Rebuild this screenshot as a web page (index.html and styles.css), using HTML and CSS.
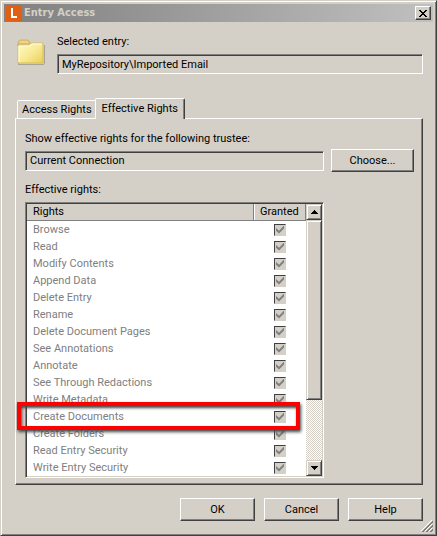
FILE: index.html
```html
<!DOCTYPE html>
<html lang="en">

<head>
    <meta charset="utf-8">
    <title>Entry Access</title>
    <link rel="stylesheet" href="styles.css">
</head>

<body>
    <div class="window">
        <div class="titlebar">
            <svg class="logo" viewBox="0 0 16 16" width="16" height="16">
                <rect width="16" height="16" fill="#e05f14" />
                <path d="M6 3v9h5" fill="none" stroke="#fff" stroke-width="2" />
            </svg>
            <h1>Entry Access</h1>
            <button class="close" type="button" aria-label="Close">
                <svg viewBox="0 0 8 7" width="8" height="7" shape-rendering="crispEdges">
                    <path d="M0 0h2v1h1v1h2v-1h1v-1h2v1h-1v1h-1v1h-1v1h1v1h1v1h1v1h-2v-1h-1v-1h-2v1h-1v1h-2v-1h1v-1h1v-1h1v-1h-1v-1h-1v-1h-1z" />
                </svg>
            </button>
        </div>

        <div class="entry">
            <svg class="folder" viewBox="0 0 28 26" width="28" height="26">
                <defs>
                    <linearGradient id="paper" x1="0" y1="0" x2="1" y2="1">
                        <stop offset="0" stop-color="#fffbc6" />
                        <stop offset="0.5" stop-color="#f9ea96" />
                        <stop offset="1" stop-color="#ebcf58" />
                    </linearGradient>
                </defs>
                <path d="M1 4h1v21h26V6h-1v20H1z" fill="#aaa496" />
                <path d="M1 7V3l2-2h8l2 2v2H1z" fill="#e8c76c" stroke="#d1b467" />
                <path d="M3 3h8" stroke="#f7e2a0" />
                <path d="M1 6h11l2-2h12v20H1z" fill="url(#paper)" stroke="#d9bd61" />
                <path d="M2 23V7h11l2-2h10" fill="none" stroke="#fffce0" />
            </svg>
            <div class="entry-field">
                <label for="entry">Selected entry:</label>
                <input class="field" id="entry" type="text" value="MyRepository\Imported Email" readonly>
            </div>
        </div>

        <div class="tabs" role="tablist">
            <button class="tab" type="button" role="tab" aria-selected="false">Access Rights</button>
            <button class="tab active" type="button" role="tab" aria-selected="true">Effective Rights</button>
        </div>

        <div class="panel" role="tabpanel">
            <label class="wide" for="trustee">Show effective rights for the following trustee:</label>
            <input class="field" id="trustee" type="text" value="Current Connection" readonly>
            <button class="btn choose" type="button">Choose...</button>

            <div class="caption wide" id="rights-label">Effective rights:</div>
            <div class="list">
                <table aria-labelledby="rights-label">
                    <thead>
                        <tr><th>Rights</th><th class="granted">Granted</th></tr>
                    </thead>
                    <tbody>
                        <tr><td><label for="r1">Browse</label></td><td><input id="r1" type="checkbox" checked disabled></td></tr>
                        <tr><td><label for="r2">Read</label></td><td><input id="r2" type="checkbox" checked disabled></td></tr>
                        <tr><td><label for="r3">Modify Contents</label></td><td><input id="r3" type="checkbox" checked disabled></td></tr>
                        <tr><td><label for="r4">Append Data</label></td><td><input id="r4" type="checkbox" checked disabled></td></tr>
                        <tr><td><label for="r5">Delete Entry</label></td><td><input id="r5" type="checkbox" checked disabled></td></tr>
                        <tr><td><label for="r6">Rename</label></td><td><input id="r6" type="checkbox" checked disabled></td></tr>
                        <tr><td><label for="r7">Delete Document Pages</label></td><td><input id="r7" type="checkbox" checked disabled></td></tr>
                        <tr><td><label for="r8">See Annotations</label></td><td><input id="r8" type="checkbox" checked disabled></td></tr>
                        <tr><td><label for="r9">Annotate</label></td><td><input id="r9" type="checkbox" checked disabled></td></tr>
                        <tr><td><label for="r10">See Through Redactions</label></td><td><input id="r10" type="checkbox" checked disabled></td></tr>
                        <tr><td><label for="r11">Write Metadata</label></td><td><input id="r11" type="checkbox" checked disabled></td></tr>
                        <tr><td><label for="r12">Create Documents</label></td><td><input id="r12" type="checkbox" checked disabled></td></tr>
                        <tr><td><label for="r13">Create Folders</label></td><td><input id="r13" type="checkbox" checked disabled></td></tr>
                        <tr><td><label for="r14">Read Entry Security</label></td><td><input id="r14" type="checkbox" checked disabled></td></tr>
                        <tr><td><label for="r15">Write Entry Security</label></td><td><input id="r15" type="checkbox" checked disabled></td></tr>
                    </tbody>
                </table>
                <div class="scrollbar">
                    <button class="arrow" type="button" aria-label="Scroll up">
                        <svg viewBox="0 0 7 4" width="7" height="4" shape-rendering="crispEdges"><path d="M3 0h1v1h1v1h1v1h1v1H0V3h1V2h1V1h1z" /></svg>
                    </button>
                    <div class="track"><div class="thumb"></div></div>
                    <button class="arrow" type="button" aria-label="Scroll down">
                        <svg viewBox="0 0 7 4" width="7" height="4" shape-rendering="crispEdges"><path d="M0 0h7v1H6v1H5v1H4v1H3V3H2V2H1V1H0z" /></svg>
                    </button>
                </div>
                <div class="highlight"></div>
            </div>
        </div>

        <div class="actions">
            <button class="btn" type="button">OK</button>
            <button class="btn" type="button">Cancel</button>
            <button class="btn" type="button">Help</button>
        </div>

        <svg class="grip" viewBox="0 0 12 12" width="12" height="12">
            <path d="M0 11L11 0M4 11l7-7M8 11l3-3" stroke="#fff" />
            <path d="M1 12L12 1M2 12L12 2M5 12l7-7M6 12l6-6M9 12l3-3M10 12l2-2" stroke="#808080" />
        </svg>
    </div>
</body>

</html>
```
FILE: styles.css
```css
* {
    box-sizing: border-box;
}

body {
    margin: 0;
    background: #d4d0c8;
}

body, button, input {
    font-family: Tahoma, Roboto, sans-serif;
    font-size: 11px;
    line-height: 14px;
    color: #000;
}

button, input {
    margin: 0;
    border-radius: 0;
}

button {
    padding: 0;
    background: #d4d0c8;
}

.window {
    position: relative;
    min-height: 100vh;
    padding: 2px;
    border: 1px solid;
    border-color: #d4d0c8 #404040 #404040 #d4d0c8;
    box-shadow: inset 1px 1px #fff, inset -1px -1px #808080;
}

/* title bar */
.titlebar {
    display: flex;
    align-items: center;
    height: 18px;
    margin: 1px;
    padding: 0 2px;
    background: linear-gradient(to right, #808080, #c0c0c0);
}

.titlebar h1 {
    flex: 1;
    margin: 0 2px;
    font-family: "DejaVu Sans Condensed", "DejaVu Sans", sans-serif;
    font-size: 11px;
    font-stretch: condensed;
    font-weight: bold;
    color: #d4d0c8;
}

.close {
    display: flex;
    align-items: center;
    justify-content: center;
    width: 16px;
    height: 14px;
    border: 1px solid;
    border-color: #fff #404040 #404040 #fff;
    box-shadow: inset -1px -1px #808080;
}

/* selected entry */
.entry {
    display: flex;
    gap: 12px;
    padding: 12px 11px 0 14px;
}

.folder {
    margin-top: 4px;
}

.entry-field {
    flex: 1;
    display: flex;
    flex-direction: column;
    gap: 5px;
}

.field {
    width: 100%;
    height: 20px;
    padding: 0 4px;
    border: 1px solid;
    border-color: #808080 #fff #fff #808080;
    box-shadow: inset 1px 1px #404040;
    background: #d4d0c8;
    outline: 0;
}

/* tabs */
.tabs {
    display: flex;
    align-items: flex-end;
    margin: 24px 14px 0;
}

.tab {
    height: 18px;
    padding: 0 4px;
    border: 1px solid #fff;
    border-bottom: 0;
    border-radius: 2px 2px 0 0;
}

.tab.active {
    z-index: 1;
    height: 21px;
    margin: 0 0 -1px -2px;
    padding: 0 6px 1px;
    border-right-color: #404040;
    box-shadow: inset -1px 0 #808080;
}

.panel {
    display: grid;
    grid-template-columns: 1fr 83px;
    column-gap: 7px;
    align-items: center;
    margin: 0 11px 0 12px;
    padding: 13px 8px 6px 9px;
    border: 1px solid;
    border-color: #fff #404040 #404040 #fff;
    box-shadow: inset -1px -1px #808080;
}

.wide {
    grid-column: 1 / -1;
}

.caption {
    margin: 11px 0 5px;
}

.btn {
    width: 75px;
    height: 23px;
    border: 1px solid;
    border-color: #fff #404040 #404040 #fff;
    box-shadow: inset -1px -1px #808080;
}

.choose {
    width: 83px;
    margin-top: 3px;
}

.panel .field {
    margin-top: 3px;
}

/* rights list */
.list {
    position: relative;
    display: flex;
    padding: 1px;
    border: 1px solid;
    border-color: #808080 #fff #fff #808080;
    box-shadow: inset 1px 1px #404040, inset -1px -1px #d4d0c8;
    background: #fff;
}

table {
    flex: 1;
    table-layout: fixed;
    border-collapse: separate;
    border-spacing: 0;
}

th, td {
    height: 17px;
    padding: 0 6px;
    line-height: 14px;
    text-align: left;
}

th {
    border-right: 1px solid #808080;
    border-bottom: 1px solid #808080;
    background: #d4d0c8;
    box-shadow: inset 1px 0 #fff;
    font-weight: normal;
}

th:first-child {
    box-shadow: none;
}

.granted {
    width: 52px;
}

td {
    color: #808080;
}

td:last-child {
    padding: 0 0 0 20px;
}

td input {
    display: block;
    appearance: none;
    width: 12px;
    height: 12px;
    border: 1px solid;
    border-color: #404040 #d4d0c8 #d4d0c8 #404040;
    background: #d4d0c8;
}

td input:checked::before {
    content: "";
    display: block;
    width: 8px;
    height: 8px;
    margin: 1px;
    background: #808080;
    clip-path: polygon(0 30%, 38% 65%, 100% 0, 100% 36%, 38% 100%, 0 65%);
}

.scrollbar {
    display: flex;
    flex-direction: column;
    width: 16px;
}

.arrow, .thumb {
    border: 1px solid;
    border-color: #d4d0c8 #404040 #404040 #d4d0c8;
    box-shadow: inset 1px 1px #fff, inset -1px -1px #808080;
    background: #d4d0c8;
}

.arrow {
    display: flex;
    align-items: center;
    justify-content: center;
    width: 16px;
    height: 16px;
}

.track {
    flex: 1;
    background: repeating-conic-gradient(#fff 0 25%, #d4d0c8 0 50%) 0 0 / 2px 2px;
}

.thumb {
    height: 75%;
}

/* callout frame around one row */
.highlight {
    position: absolute;
    top: 199px;
    right: 23px;
    left: -9px;
    height: 28px;
    border: 4px solid #f00;
    box-shadow: 1px 2px 3px #444, inset 1px 2px 3px #444;
}

/* bottom buttons */
.actions {
    display: flex;
    justify-content: flex-end;
    gap: 9px;
    padding: 13px 11px 10px;
}

.grip {
    position: absolute;
    right: 3px;
    bottom: 3px;
}
```
